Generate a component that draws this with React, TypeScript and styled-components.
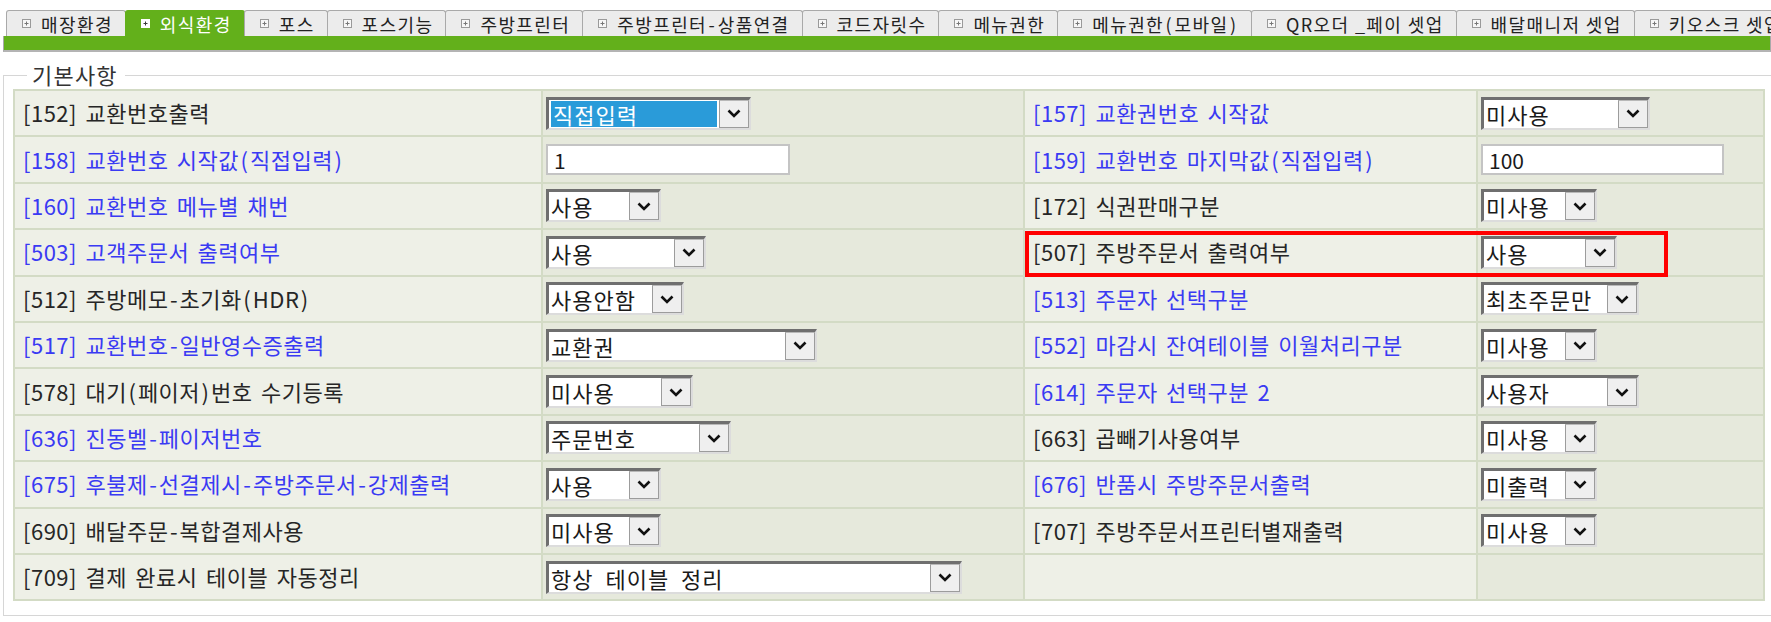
import React from 'react';
import styled, { createGlobalStyle } from 'styled-components';

const GlobalStyle = createGlobalStyle`
  html, body {
    margin: 0;
    padding: 0;
    background: #ffffff;
    overflow: hidden;
  }
  body {
    font-family: "Noto Sans CJK KR", "Noto Sans", sans-serif;
    color: #222;
  }
`;

type Control =
  | { kind: 'select'; value: string; width: number; focused?: boolean }
  | { kind: 'input'; value: string; width: number }
  | { kind: 'none' };

interface Field {
  code?: string;
  label?: string;
  blue?: boolean;
  control: Control;
  marked?: boolean;
}

const TABS = [
  '매장환경',
  '외식환경',
  '포스',
  '포스기능',
  '주방프린터',
  '주방프린터-상품연결',
  '코드자릿수',
  '메뉴권한',
  '메뉴권한(모바일)',
  'QR오더 _페이 셋업',
  '배달매니저 셋업',
  '키오스크 셋업',
];

const sel = (value: string, width: number, focused = false): Control => ({ kind: 'select', value, width, focused });
const inp = (value: string, width: number): Control => ({ kind: 'input', value, width });

const ROWS: [Field, Field][] = [
  [
    { code: '152', label: '교환번호출력', control: sel('직접입력', 205, true) },
    { code: '157', label: '교환권번호 시작값', blue: true, control: sel('미사용', 169) },
  ],
  [
    { code: '158', label: '교환번호 시작값(직접입력)', blue: true, control: inp('1', 244) },
    { code: '159', label: '교환번호 마지막값(직접입력)', blue: true, control: inp('100', 243) },
  ],
  [
    { code: '160', label: '교환번호 메뉴별 채번', blue: true, control: sel('사용', 115) },
    { code: '172', label: '식권판매구분', control: sel('미사용', 116) },
  ],
  [
    { code: '503', label: '고객주문서 출력여부', blue: true, control: sel('사용', 160) },
    { code: '507', label: '주방주문서 출력여부', control: sel('사용', 136), marked: true },
  ],
  [
    { code: '512', label: '주방메모-초기화(HDR)', control: sel('사용안함', 138) },
    { code: '513', label: '주문자 선택구분', blue: true, control: sel('최초주문만', 158) },
  ],
  [
    { code: '517', label: '교환번호-일반영수증출력', blue: true, control: sel('교환권', 271) },
    { code: '552', label: '마감시 잔여테이블 이월처리구분', blue: true, control: sel('미사용', 116) },
  ],
  [
    { code: '578', label: '대기(페이저)번호 수기등록', control: sel('미사용', 147) },
    { code: '614', label: '주문자 선택구분 2', blue: true, control: sel('사용자', 158) },
  ],
  [
    { code: '636', label: '진동벨-페이저번호', blue: true, control: sel('주문번호', 185) },
    { code: '663', label: '곱빼기사용여부', control: sel('미사용', 116) },
  ],
  [
    { code: '675', label: '후불제-선결제시-주방주문서-강제출력', blue: true, control: sel('사용', 115) },
    { code: '676', label: '반품시 주방주문서출력', blue: true, control: sel('미출력', 116) },
  ],
  [
    { code: '690', label: '배달주문-복합결제사용', control: sel('미사용', 115) },
    { code: '707', label: '주방주문서프린터별재출력', control: sel('미사용', 116) },
  ],
  [
    { code: '709', label: '결제 완료시 테이블 자동정리', control: sel('항상 테이블 정리', 416) },
    { control: { kind: 'none' } },
  ],
];

const Punct = styled.span<{ $gap: number }>`
  margin: 0 ${(p) => p.$gap}px;
`;

const spaced = (text: string, gap: number) =>
  text.split(/([-()])/).map((part, i) =>
    /^[-()]$/.test(part) ? (
      <Punct key={i} $gap={gap}>
        {part}
      </Punct>
    ) : (
      <React.Fragment key={i}>{part}</React.Fragment>
    )
  );

const Page = styled.div`
  width: 1771px;
  height: 622px;
  padding: 10px 0 0 3px;
  box-sizing: border-box;
  overflow: hidden;
`;

const TabStrip = styled.div`
  display: flex;
  align-items: flex-end;
  padding-left: 3px;
  height: 26px;
  white-space: nowrap;
`;

const Tab = styled.div<{ $active?: boolean }>`
  flex: none;
  display: flex;
  align-items: center;
  gap: 10px;
  height: 26px;
  box-sizing: border-box;
  padding: 0 12px 0 15px;
  margin-right: -1px;
  border: 1px solid ${(p) => (p.$active ? '#63b01b' : '#a9a9a9')};
  border-bottom: none;
  border-radius: 3px 3px 0 0;
  background: ${(p) => (p.$active ? '#63b01b' : '#ececec')};
  color: ${(p) => (p.$active ? '#ffffff' : '#222222')};
  font-size: 18px;
  letter-spacing: 1.4px;
  line-height: 1;
`;

const TabLabel = styled.span`
  white-space: pre;
`;

const TabIcon = styled.svg`
  flex: none;
  display: block;
`;

const GreenBar = styled.div`
  height: 14px;
  background: #63b01b;
  border: 1px solid #a9a9a9;
  border-top: none;
  border-bottom-width: 2px;
  border-bottom-color: #b4b4b4;
`;

const Group = styled.fieldset`
  margin: 9px 0 0 0;
  width: 1790px;
  padding: 0 9px 14px 9px;
  border: 1px solid #d6d6d6;
  box-sizing: border-box;
`;

const Legend = styled.legend`
  margin-left: 14px;
  padding: 0 7px 2px 5px;
  font-size: 22px;
  line-height: 26px;
  letter-spacing: 1.2px;
  color: #333;
`;

const Grid = styled.table`
  width: 1750px;
  table-layout: fixed;
  border-collapse: collapse;
  border: 2px solid #d3dbc5;
`;

const Cell = styled.td<{ $kind: 'label' | 'value' }>`
  position: relative;
  height: 46.4px;
  box-sizing: border-box;
  padding: ${(p) => (p.$kind === 'label' ? '0 8px 2px 8px' : '0 3px')};
  border: 2px solid #d3dbc5;
  background: ${(p) => (p.$kind === 'label' ? '#eef0e7' : '#e6e9dc')};
  vertical-align: middle;
  white-space: nowrap;
  overflow: visible;
`;

const Label = styled.span<{ $blue?: boolean }>`
  font-size: 22px;
  color: ${(p) => (p.$blue ? '#3a3af3' : '#262626')};
  letter-spacing: 0.5px;
  word-spacing: 3px;
`;

const SelectBox = styled.div`
  display: inline-flex;
  align-items: stretch;
  height: 33px;
  box-sizing: border-box;
  border-style: solid;
  border-width: 3px 2px 2px 3px;
  border-color: #6f6f6f #dcdcdc #dcdcdc #6f6f6f;
  background: #ffffff;
  vertical-align: middle;
`;

const SelectText = styled.div<{ $focused?: boolean }>`
  flex: 1;
  display: flex;
  align-items: center;
  margin: ${(p) => (p.$focused ? '1px 2px' : '0')};
  padding: 0 2px;
  background: ${(p) => (p.$focused ? '#2a9bd9' : 'transparent')};
  color: ${(p) => (p.$focused ? '#ffffff' : '#1a1a1a')};
  font-size: 22px;
  letter-spacing: 1px;
  word-spacing: 6px;
  white-space: nowrap;
`;

const ArrowButton = styled.div`
  flex: none;
  width: 30px;
  display: flex;
  align-items: center;
  justify-content: center;
  box-sizing: border-box;
  border: 1px solid #9c9c9c;
  border-top-color: #b8b8b8;
  background: #efefef;
`;

const TextInput = styled.div`
  display: inline-flex;
  align-items: center;
  height: 31px;
  box-sizing: border-box;
  padding: 0 6px;
  border: 2px solid #c4c4c4;
  background: #ffffff;
  font-size: 21px;
  color: #1a1a1a;
  vertical-align: middle;
`;

const Marker = styled.div`
  position: absolute;
  z-index: 2;
  left: 0;
  top: 1px;
  width: 643px;
  height: 46px;
  box-sizing: border-box;
  border: 4px solid #ff0000;
  pointer-events: none;
`;

const PlusIcon = ({ active }: { active: boolean }) => (
  <TabIcon width="9" height="9" viewBox="0 0 9 9">
    <rect x="0.5" y="0.5" width="8" height="8" fill={active ? '#ffffff' : '#f7f7f7'} stroke={active ? '#ffffff' : '#9a9a9a'} />
    <path d="M2.5 4.5h4M4.5 2.5v4" stroke={active ? '#3a3a3a' : '#777'} strokeWidth="1" />
  </TabIcon>
);

const Chevron = () => (
  <svg width="14" height="9" viewBox="0 0 14 9">
    <polyline points="1.5,1.5 7,7 12.5,1.5" fill="none" stroke="#111" strokeWidth="2.6" />
  </svg>
);

const FieldControl = ({ control }: { control: Control }) => {
  if (control.kind === 'select') {
    return (
      <SelectBox style={{ width: control.width }}>
        <SelectText $focused={control.focused}>{control.value}</SelectText>
        <ArrowButton>
          <Chevron />
        </ArrowButton>
      </SelectBox>
    );
  }
  if (control.kind === 'input') {
    return <TextInput style={{ width: control.width }}>{control.value}</TextInput>;
  }
  return null;
};

const FieldCells = ({ field }: { field: Field }) => (
  <>
    <Cell $kind="label">
      {field.code && field.label && (
        <Label $blue={field.blue}>
          [{field.code}] {spaced(field.label, 1.5)}
        </Label>
      )}
      {field.marked && <Marker />}
    </Cell>
    <Cell $kind="value">
      <FieldControl control={field.control} />
    </Cell>
  </>
);

export default function App() {
  return (
    <Page>
      <GlobalStyle />
      <TabStrip>
        {TABS.map((t, i) => (
          <Tab key={t} $active={i === 1}>
            <PlusIcon active={i === 1} />
            <TabLabel>{spaced(t, 1.5)}</TabLabel>
          </Tab>
        ))}
      </TabStrip>
      <GreenBar />
      <Group>
        <Legend>기본사항</Legend>
        <Grid>
          <colgroup>
            <col style={{ width: 528 }} />
            <col style={{ width: 482 }} />
            <col style={{ width: 453 }} />
            <col style={{ width: 287 }} />
          </colgroup>
          <tbody>
            {ROWS.map(([left, right], i) => (
              <tr key={i}>
                <FieldCells field={left} />
                <FieldCells field={right} />
              </tr>
            ))}
          </tbody>
        </Grid>
      </Group>
    </Page>
  );
}
